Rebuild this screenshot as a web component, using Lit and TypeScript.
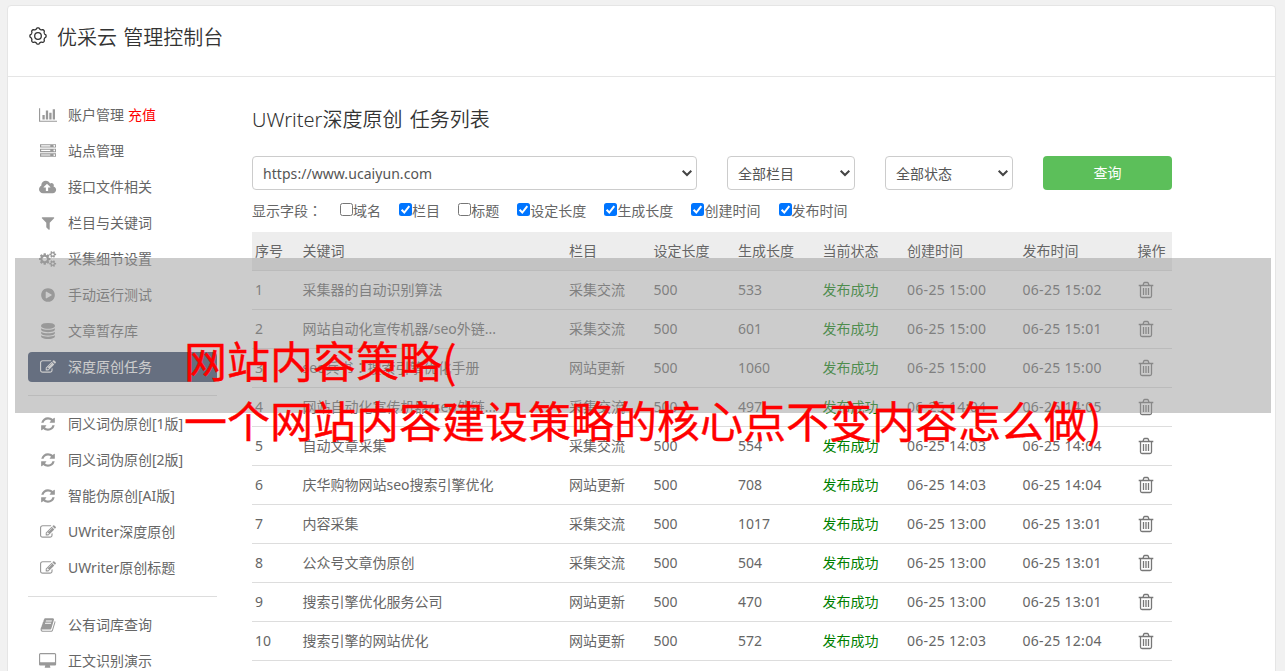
import { LitElement, html, css, svg } from "lit";
import { customElement } from "lit/decorators.js";

const sat = (y: number) =>
  `M1920 ${y}v140q0 16-149 31-12 27-30 52 51 113 51 138 0 4-4 7-122 71-124 71-8 0-46-47t-52-68q-20 2-30 2t-30-2q-14 21-52 68t-46 47q-2 0-124-71-4-3-4-7 0-25 51-138-18-25-30-52-149-15-149-31v-140q0-16 149-31 13-29 30-52-51-113-51-138 0-4 4-7 4-2 35-20t59-34 30-16q8 0 46 46.5t52 67.5q20-2 30-2t30 2q51-71 92-112l6-2q4 0 124 70 4 3 4 7 0 25-51 138 17 23 30 52 149 15 149 31z`;
const disc = (y: number) =>
  `M896 ${y}q237 0 443-43t325-127v170q0 69-103 128t-280 93.5-385 34.5-385-34.5-280-93.5-103-128v-170q119 84 325 127t443 43z`;
const rack = (y: number) =>
  `M0 ${y}h1792v384h-1792zM128 ${y + 128}v128h1024v-128zM1600 ${y + 96}a96 96 0 1 0 .1 0z`;

// [min-x, width, path data] on a 1792-unit em square
const ICONS: Record<string, [number, number, string]> = {
  chart: [0, 2048, "M640 896v512h-256v-512h256zm384-512v1024h-256v-1024h256zm1024 1152v128h-2048v-1536h128v1408h1920zm-640-896v768h-256v-768h256zm384-384v1152h-256v-1152h256z"],
  server: [0, 1792, rack(128) + rack(640) + rack(1152)],
  cloud: [0, 1920, "M1280 928q0-14-9-23l-352-352q-9-9-23-9t-23 9l-351 351q-10 12-10 24 0 14 9 23t23 9h224v352q0 13 9.5 22.5t22.5 9.5h192q13 0 22.5-9.5t9.5-22.5v-352h224q13 0 22.5-9.5t9.5-22.5zm640 288q0 159-112.5 271.5t-271.5 112.5h-1088q-185 0-316.5-131.5t-131.5-316.5q0-130 70-240t188-165q-2-30-2-43 0-212 150-362t362-150q156 0 285.5 87t188.5 231q71-62 166-62 106 0 181 75t75 181q0 76-41 138 130 31 213.5 135.5t83.5 238.5z"],
  filter: [0, 1792, "M1595 295q17 41-14 70l-493 493v742q0 42-39 59-13 5-25 5-27 0-45-19l-256-256q-19-19-19-45v-486l-493-493q-31-29-14-70 17-39 59-39h1280q42 0 59 39z"],
  cogs: [0, 1920, "M896 896q0-106-75-181t-181-75-181 75-75 181 75 181 181 75 181-75 75-181zm768 512q0-52-38-90t-90-38-90 38-38 90q0 53 37.5 90.5t90.5 37.5 90.5-37.5 37.5-90.5zm0-1024q0-52-38-90t-90-38-90 38-38 90q0 53 37.5 90.5t90.5 37.5 90.5-37.5 37.5-90.5zm-384 421v185q0 10-7 19.5t-16 10.5l-155 24q-11 35-32 76 34 48 90 115 7 11 7 20 0 12-7 19-23 30-82.5 89.5t-78.5 59.5q-11 0-21-7l-115-90q-37 19-77 31-11 108-23 155-7 24-30 24h-186q-11 0-20-7.5t-10-17.5l-23-153q-34-10-75-31l-118 89q-7 7-20 7-11 0-21-8-144-133-144-160 0-9 7-19 10-14 41-53t47-61q-23-44-35-82l-152-24q-10-1-17-9.5t-7-19.5v-185q0-10 7-19.5t16-10.5l155-24q11-35 32-76-34-48-90-115-7-11-7-20 0-12 7-20 22-30 82-89t79-59q11 0 21 7l115 90q34-18 77-32 11-108 23-154 7-24 30-24h186q11 0 20 7.5t10 17.5l23 153q34 10 75 31l118-89q8-7 20-7 11 0 21 8 144 133 144 160 0 8-7 19-12 16-42 54t-45 60q23 48 34 82l152 23q10 2 17 10.5t7 19.5z" + sat(1338) + sat(314)],
  play: [0, 1792, "M896 128q209 0 385.5 103t279.5 279.5 103 385.5-103 385.5-279.5 279.5-385.5 103-385.5-103-279.5-279.5-103-385.5 103-385.5 279.5-279.5 385.5-103zm384 823q32-18 32-55t-32-55l-544-320q-31-19-64-1-32 19-32 56v640q0 37 32 56 16 8 32 8 17 0 32-9z"],
  database: [0, 1792, disc(768) + disc(1536) + disc(1152) + "M896 0q208 0 385 34.5t280 93.5 103 128v128q0 69-103 128t-280 93.5-385 34.5-385-34.5-280-93.5-103-128v-128q0-69 103-128t280-93.5 385-34.5z"],
  edit: [0, 1792, "M888 1184l116-116-152-152-116 116v56h96v96h56zm440-720q-16-16-33 1l-350 350q-17 17-1 33t33-1l350-350q17-17 1-33zm80 594v190q0 119-84.5 203.5t-203.5 84.5h-832q-119 0-203.5-84.5t-84.5-203.5v-832q0-119 84.5-203.5t203.5-84.5h832q63 0 117 25 15 7 18 23 3 17-9 29l-49 49q-14 14-32 8-23-6-45-6h-832q-66 0-113 47t-47 113v832q0 66 47 113t113 47h832q66 0 113-47t47-113v-126q0-13 9-22l64-64q15-15 35-7t20 29zm-96-738l288 288-672 672h-288v-288zm444 132l-92 92-288-288 92-92q28-28 68-28t68 28l152 152q28 28 28 68t-28 68z"],
  refresh: [0, 1792, "M1639 1056q0 5-1 7-64 268-268 434.5t-478 166.5q-146 0-282.5-55t-243.5-157l-129 129q-19 19-45 19t-45-19-19-45v-448q0-26 19-45t45-19h448q26 0 45 19t19 45-19 45l-137 137q71 66 161 102t187 36q134 0 250-65t186-179q11-17 53-117 8-23 30-23h192q13 0 22.5 9.5t9.5 22.5zm25-800v448q0 26-19 45t-45 19h-448q-26 0-45-19t-19-45 19-45l138-138q-148-137-349-137-134 0-250 65t-186 179q-11 17-53 117-8 23-30 23h-199q-13 0-22.5-9.5t-9.5-22.5v-7q65-268 270-434.5t480-166.5q146 0 284 55.5t245 156.5l130-129q19-19 45-19t45 19 19 45z"],
  book: [0, 1792, "M1703 478q40 57 18 129l-275 906q-19 64-76.5 107.5t-122.5 43.5h-923q-77 0-148.5-53.5t-99.5-131.5q-24-67-2-127 0-4 3-27t4-37q1-8-3-21.5t-3-19.5q2-11 8-21t16.5-23.5 16.5-23.5q23-38 45-91.5t30-91.5q3-10 .5-30t-.5-28q3-11 17-28t17-23q21-36 42-92t25-90q1-9-2.5-32t.5-28q4-13 22-30.5t22-22.5q19-26 42.5-84.5t27.5-96.5q1-8-3-25.5t-2-26.5q2-8 9-18t18-23 17-21q8-12 16.5-30.5t15-35 16-36 19.5-32 26.5-23.5 36-11.5 47.5 5.5l-1 3q38-9 51-9h761q74 0 114 56t18 130l-274 906q-36 119-71.5 153.5t-128.5 34.5h-869q-27 0-38 15-11 16-1 43 24 70 144 70h923q29 0 56-15.5t35-41.5l300-987q7-22 5-57 38 15 59 43zm-1064 2q-4 13 2 22.5t20 9.5h608q13 0 25.5-9.5t16.5-22.5l21-64q4-13-2-22.5t-20-9.5h-608q-13 0-25.5 9.5t-16.5 22.5zm-83 256q-4 13 2 22.5t20 9.5h608q13 0 25.5-9.5t16.5-22.5l21-64q4-13-2-22.5t-20-9.5h-608q-13 0-25.5 9.5t-16.5 22.5z"],
  desktop: [-64, 1920, "M1728 992v-832q0-13-9.5-22.5t-22.5-9.5h-1600q-13 0-22.5 9.5t-9.5 22.5v832q0 13 9.5 22.5t22.5 9.5h1600q13 0 22.5-9.5t9.5-22.5zm128-832v1088q0 66-47 113t-113 47h-544q0 37 16 77.5t32 71 16 43.5q0 26-19 45t-45 19h-512q-26 0-45-19t-19-45q0-14 16-44t32-70 16-78h-544q-66 0-113-47t-47-113v-1088q0-66 47-113t113-47h1600q66 0 113 47t47 113z"],
};

const icon = (name: string) => {
  const [x, w, d] = ICONS[name];
  return html`<svg class="ic" width=${(w / 112).toFixed(2)} height="16" viewBox="${x} 0 ${w} 1792">${svg`<path fill-rule="evenodd" d=${d}></path>`}</svg>`;
};

const trash = html`<svg class="trash" width="16" height="18" viewBox="0 0 16 18">
  <path d="M.7 4.5h14.6M5 4.2l.7-2q.3-.7 1-.7h2.6q.7 0 1 .7l.7 2M2.5 4.8v10.2q0 1.5 1.5 1.5h8q1.5 0 1.5-1.5V4.8M5.5 7v7M8 7v7M10.5 7v7"></path>
</svg>`;

const gearPath = (() => {
  const pts: string[] = [];
  for (let i = 0; i <= 96; i++) {
    const a = (i / 96) * Math.PI * 2;
    const r = 7.5 + 0.65 * Math.tanh(1.6 * Math.cos(8 * a));
    pts.push(`${(9 + r * Math.sin(a)).toFixed(2)} ${(9 - r * Math.cos(a)).toFixed(2)}`);
  }
  return "M" + pts.join("L") + "Z";
})();

const MENU: [string, string][][] = [
  [["chart", "账户管理"], ["server", "站点管理"], ["cloud", "接口文件相关"], ["filter", "栏目与关键词"], ["cogs", "采集细节设置"], ["play", "手动运行测试"], ["database", "文章暂存库"], ["edit", "深度原创任务"]],
  [["refresh", "同义词伪原创[1版]"], ["refresh", "同义词伪原创[2版]"], ["refresh", "智能伪原创[AI版]"], ["edit", "UWriter深度原创"], ["edit", "UWriter原创标题"]],
  [["book", "公有词库查询"], ["desktop", "正文识别演示"]],
];

const FIELDS: [string, boolean][] = [["域名", false], ["栏目", true], ["标题", false], ["设定长度", true], ["生成长度", true], ["创建时间", true], ["发布时间", true]];

const colon = html`<span class="colon">：</span>`;

const ROWS: unknown[][] = [
  ["采集器的自动识别算法", "采集交流", "533", "06-25 15:00", "06-25 15:02"],
  ["网站自动化宣传机器/seo外链...", "采集交流", "601", "06-25 15:00", "06-25 15:01"],
  [html`seo兵书${colon}搜索引擎优化手册`, "网站更新", "1060", "06-25 15:00", "06-25 15:00"],
  ["网站自动化宣传机器/seo外链...", "采集交流", "497", "06-25 14:04", "06-25 14:05"],
  ["自动文章采集", "采集交流", "554", "06-25 14:03", "06-25 14:04"],
  ["庆华购物网站seo搜索引擎优化", "网站更新", "708", "06-25 14:03", "06-25 14:04"],
  ["内容采集", "采集交流", "1017", "06-25 13:00", "06-25 13:01"],
  ["公众号文章伪原创", "采集交流", "504", "06-25 13:00", "06-25 13:01"],
  ["搜索引擎优化服务公司", "网站更新", "470", "06-25 13:00", "06-25 13:01"],
  ["搜索引擎的网站优化", "网站更新", "572", "06-25 12:03", "06-25 12:04"],
];

@customElement("app-root")
export class AppRoot extends LitElement {
  static styles = css`
    :host { display: block; position: relative; height: 671px; overflow: hidden; box-sizing: border-box; padding: 5px 9px 0 7px; background: #f1f1f1; color: #666; font: 14px/20px "Noto Sans", "Noto Sans CJK SC", sans-serif; }
    * { box-sizing: border-box; }
    .card { height: 700px; background: #fff; border: 1px solid #e5e5e5; border-radius: 4px; }
    .head { height: 71px; display: flex; align-items: flex-start; padding: 20px 0 0 20.5px; gap: 10.5px; border-bottom: 1px solid #e5e5e5; color: #333; }
    .head svg { margin-top: .5px; fill: none; stroke: #333; stroke-width: 1.3; }
    .head h1 { margin: 0; font-size: 20px; line-height: 24px; font-weight: 350; word-spacing: 1px; white-space: nowrap; }
    .body { display: flex; padding: 20px 0 0 20px; gap: 35px; }
    .side { width: 189px; flex: none; padding-top: 3px; }
    .item { height: 30px; margin-bottom: 6px; display: flex; align-items: center; gap: 10px; padding-left: 10px; border-radius: 4px; white-space: nowrap; }
    .slot { width: 20px; display: flex; justify-content: center; flex: none; }
    .ic { fill: #999; flex: none; }
    .item.on { background: #334567; color: #fff; }
    .on .ic { fill: #fff; }
    .red { color: #f00; margin-left: 4px; }
    .sep { height: 1px; background: #ddd; margin: 13px 0 13px; }
    .main { width: 920px; }
    h2 { margin: 11px 0 0; font-size: 20px; line-height: 24px; font-weight: 350; word-spacing: 2px; color: #333; white-space: nowrap; }
    .filters { display: flex; gap: 30px; margin-top: 24px; height: 34px; }
    .sel { display: flex; align-items: center; justify-content: space-between; border: 1px solid #ccc; border-radius: 4px; padding: 0 3px 0 10px; color: #555; width: 128px; }
    .sel span { padding-top: 1px; }
    .sel.wide { width: 445px; }
    .sel.wide span { letter-spacing: .06px; }
    .sel svg { fill: none; stroke: #444; stroke-width: 2; }
    .btn { width: 129px; height: 34px; border: 0; border-radius: 4px; background: #5cbf5a; color: #fff; font: inherit; padding: 0; }
    .fields { display: flex; align-items: center; height: 20px; margin-top: 11px; white-space: nowrap; }
    .fields .lead { width: 88px; }
    .colon { font-family: "Noto Sans CJK TC", sans-serif; line-height: 1; }
    .fields label { display: flex; align-items: center; margin-right: 18.1px; }
    .box { width: 13px; height: 13px; border: 1px solid #767676; border-radius: 2.5px; background: #fff; margin-top: -3px; }
    .box.ck { border: 0; background: #0075ff; }
    .box svg { display: block; fill: none; stroke: #fff; stroke-width: 2; }
    .row { display: grid; grid-template-columns: 47.5px 266.5px 84.5px 84.5px 84.5px 84.5px 115.5px 115px 37px; height: 39px; align-items: center; padding-left: 3px; border-bottom: 1px solid #ddd; white-space: nowrap; }
    .row.th { background: #ededed; margin-top: 11px; }
    .ok { color: green; }
    .date { letter-spacing: .3px; }
    .trash { display: block; fill: none; stroke: #777; stroke-width: 1.3; }
    .veil { position: absolute; left: 15px; top: 258px; width: 1256px; height: 155px; background: rgba(153, 153, 153, 0.5); }
    .caption { position: absolute; left: 184px; top: 328.5px; margin: 0; color: #f00; font: 43px/60px "Noto Sans CJK SC", sans-serif; -webkit-text-stroke: .4px #f00; white-space: nowrap; }
  `;

  private select(text: string, cls = "") {
    return html`<div class="sel ${cls}"><span>${text}</span><svg width="12" height="8" viewBox="0 0 12 8"><path d="M1.7 1.7L6 6l4.3-4.3"></path></svg></div>`;
  }

  render() {
    return html`
      <div class="card">
        <div class="head">
          <svg width="18" height="18" viewBox="0 0 18 18"><path d=${gearPath}></path><circle cx="9" cy="9" r="3.3"></circle></svg>
          <h1>优采云 管理控制台</h1>
        </div>
        <div class="body">
          <nav class="side">
            ${MENU.map((group, g) => html`
              ${g ? html`<div class="sep"></div>` : ""}
              ${group.map(([ic, label]) => html`<div class="item ${label === "深度原创任务" ? "on" : ""}"><span class="slot">${icon(ic)}</span><span>${label}${label === "账户管理" ? html`<span class="red">充值</span>` : ""}</span></div>`)}
            `)}
          </nav>
          <div class="main">
            <h2>UWriter深度原创 任务列表</h2>
            <div class="filters">
              ${this.select("https://www.ucaiyun.com", "wide")}${this.select("全部栏目")}${this.select("全部状态")}
              <button class="btn">查询</button>
            </div>
            <div class="fields">
              <span class="lead">显示字段${colon}</span>
              ${FIELDS.map(([name, on]) => html`<label><span class="box ${on ? "ck" : ""}">${on ? html`<svg width="13" height="13" viewBox="0 0 13 13"><path d="M2.6 6.8l2.7 2.7 5-6.4"></path></svg>` : ""}</span>${name}</label>`)}
            </div>
            <div class="row th">
              ${["序号", "关键词", "栏目", "设定长度", "生成长度", "当前状态", "创建时间", "发布时间", "操作"].map((t) => html`<span>${t}</span>`)}
            </div>
            ${ROWS.map(([kw, col, len, made, pub], i) => html`<div class="row"><span>${i + 1}</span><span>${kw}</span><span>${col}</span><span>500</span><span>${len}</span><span class="ok">发布成功</span><span class="date">${made}</span><span class="date">${pub}</span><span>${trash}</span></div>`)}
          </div>
        </div>
      </div>
      <div class="veil"></div>
      <p class="caption">网站内容策略(<br />一个网站内容建设策略的核心点不变内容怎么做)</p>
    `;
  }
}
